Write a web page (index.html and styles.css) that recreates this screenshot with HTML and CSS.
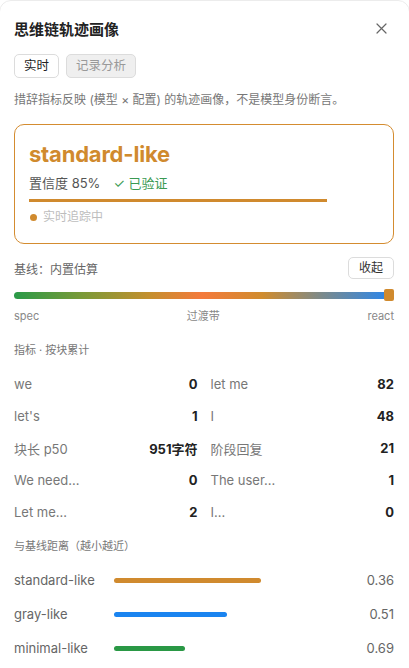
FILE: index.html
```html
<!DOCTYPE html>
<html lang="zh">
<head>
<meta charset="utf-8">
<link rel="stylesheet" href="styles.css">
</head>
<body>
<div class="panel">
  <div class="header">
    <div class="title">思维链轨迹画像</div>
    <svg class="close" width="11" height="11" viewBox="0 0 11 11"><path d="M1 1L10 10M10 1L1 10" stroke="#666" stroke-width="1.2" stroke-linecap="round"/></svg>
  </div>
  <div class="tabs">
    <div class="tab active">实时</div>
    <div class="tab">记录分析</div>
  </div>
  <div class="desc">措辞指标反映 (模型 × 配置) 的轨迹画像，不是模型身份断言。</div>
  <div class="card">
    <div class="card-title">standard-like</div>
    <div class="conf"><span>置信度 85%</span><span class="verified">✓ 已验证</span></div>
    <div class="conf-bar"><div class="conf-fill" style="width:85%"></div></div>
    <div class="live"><span class="dot"></span>实时追踪中</div>
  </div>
  <div class="baseline">
    <span>基线：内置估算</span>
    <div class="btn">收起</div>
  </div>
  <div class="spectrum">
    <div class="spectrum-bar"></div>
    <div class="marker"></div>
  </div>
  <div class="spectrum-labels"><span>spec</span><span>过渡带</span><span>react</span></div>
  <div class="section">指标 · 按块累计</div>
  <div class="metrics">
    <div class="metric"><span class="k">we</span><span class="v">0</span></div>
    <div class="metric"><span class="k">let me</span><span class="v">82</span></div>
    <div class="metric"><span class="k">let's</span><span class="v">1</span></div>
    <div class="metric"><span class="k">I</span><span class="v">48</span></div>
    <div class="metric"><span class="k">块长 p50</span><span class="v">951字符</span></div>
    <div class="metric"><span class="k">阶段回复</span><span class="v">21</span></div>
    <div class="metric"><span class="k">We need...</span><span class="v">0</span></div>
    <div class="metric"><span class="k">The user...</span><span class="v">1</span></div>
    <div class="metric"><span class="k">Let me...</span><span class="v">2</span></div>
    <div class="metric"><span class="k">I...</span><span class="v">0</span></div>
  </div>
  <div class="section sec2">与基线距离（越小越近）</div>
  <div class="dist">
    <div class="drow"><span class="dk">standard-like</span><div class="track"><div class="dbar orange" style="width:64%"></div></div><span class="dv">0.36</span></div>
    <div class="drow"><span class="dk">gray-like</span><div class="track"><div class="dbar blue" style="width:49%"></div></div><span class="dv">0.51</span></div>
    <div class="drow"><span class="dk">minimal-like</span><div class="track"><div class="dbar green" style="width:31%"></div></div><span class="dv">0.69</span></div>
  </div>
</div>
</body>
</html>
```
FILE: styles.css
```css
* { box-sizing: border-box; }
html, body { margin: 0; padding: 0; background: #fff; }
body {
  font-family: Inter, "Noto Sans CJK SC", sans-serif;
  color: #222;
  width: 409px;
  height: 668px;
  overflow: hidden;
}
.panel {
  padding: 16px 15px 0 14px;
  border: 1px solid #ececec;
  border-radius: 12px;
  height: 700px;
  margin: 0 -1px 0 -1px;
}
.header {
  display: flex;
  justify-content: space-between;
  align-items: center;
  height: 24px;
  margin-top: -1px;
}
.title { font-size: 15px; font-weight: 700; color: #222; }
.close { margin-right: 7px; }
.tabs { display: flex; gap: 7px; margin-top: 14px; }
.tab {
  height: 24px;
  padding: 0 9px;
  border: 1px solid #dcdcdc;
  border-radius: 5px;
  font-size: 12.5px;
  line-height: 22px;
  color: #999;
  background: #efefef;
}
.tab.active { background: #fff; color: #222; }
.desc { margin-top: 13px; font-size: 12px; line-height: 18px; color: #777; }
.card {
  margin-top: 15px;
  border: 1px solid #d48c30;
  border-radius: 10px;
  padding: 15px 14px 17px 14px;
  height: 120px;
}
.card-title { font-size: 22px; line-height: 28px; font-weight: 700; color: #d08a2e; letter-spacing: -0.2px; }
.conf { margin-top: 6px; font-size: 13px; line-height: 18px; color: #555; display: flex; gap: 13px; }
.verified { color: #3a9a52; }
.conf-bar { margin-top: 7px; height: 3px; }
.conf-fill { height: 3px; background: #d08a2e; }
.live { margin-top: 7px; font-size: 12px; line-height: 16px; color: #bdbdbd; display: flex; align-items: center; gap: 6px; }
.dot { width: 7px; height: 7px; border-radius: 50%; background: #d08a2e; margin-left: 1px; }
.baseline {
  margin-top: 13px;
  display: flex;
  justify-content: space-between;
  align-items: center;
  font-size: 12px;
  color: #666;
  height: 22px;
}
.btn {
  height: 22px;
  padding: 0 10px;
  border: 1px solid #dcdcdc;
  border-radius: 5px;
  font-size: 12px;
  line-height: 20px;
  color: #333;
}
.spectrum { position: relative; margin-top: 10px; height: 12px; display: flex; align-items: center; }
.spectrum-bar {
  height: 7px;
  width: 100%;
  margin-right: 4px;
  border-radius: 4px;
  background: linear-gradient(90deg, #2a9a48 0%, #7a9a38 18%, #c48f2e 36%, #f47a3c 50%, #d08c2e 66%, #7b8a8c 82%, #2a86ec 100%);
}
.marker {
  position: absolute;
  right: 0;
  top: 0;
  width: 10px;
  height: 12px;
  border-radius: 2px;
  background: #d08a2e;
}
.spectrum-labels {
  margin-top: 8px;
  display: flex;
  justify-content: space-between;
  font-size: 11px;
  line-height: 14px;
  color: #888;
}
.section { margin-top: 19px; font-size: 11px; line-height: 16px; color: #777; }
.metrics {
  margin-top: 10px;
  display: grid;
  grid-template-columns: 1fr 1fr;
  column-gap: 13px;
}
.metric {
  height: 32px;
  display: flex;
  justify-content: space-between;
  align-items: center;
  font-size: 13px;
}
.metric .k { color: #777; }
.metric .v { font-weight: 700; color: #222; }
.sec2 { margin-top: 10px; }
.dist { margin-top: 9px; }
.drow { height: 34px; display: flex; align-items: center; font-size: 13px; color: #666; }
.dk { width: 100px; }
.track { width: 230px; height: 5px; }
.dbar { height: 5px; border-radius: 3px; }
.orange { background: #d08a2e; }
.blue { background: #1a84f0; }
.green { background: #2a9845; }
.dv { margin-left: auto; }
```
